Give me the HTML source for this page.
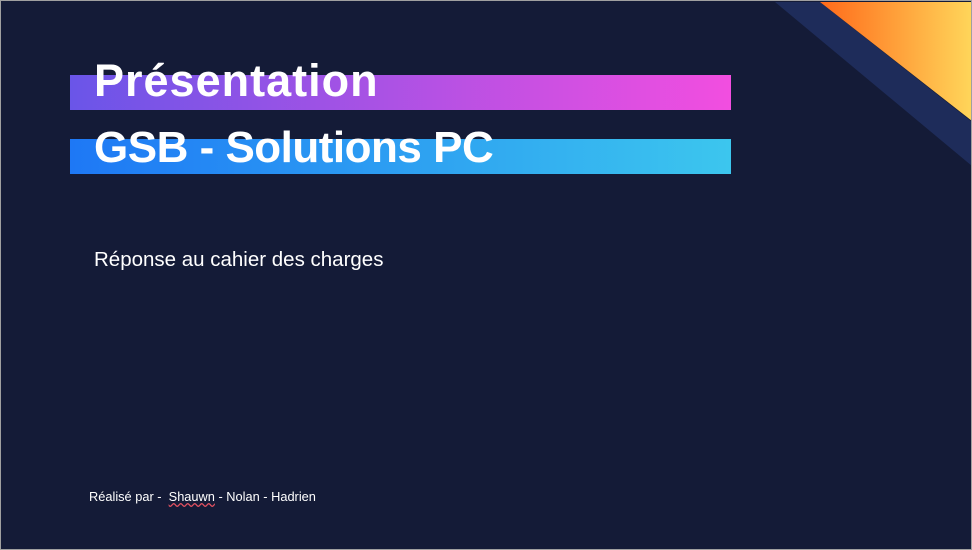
<!DOCTYPE html>
<html><head><meta charset="utf-8"><style>
html,body{margin:0;padding:0}
body{width:972px;height:550px;overflow:hidden;background:#141b37;position:relative;font-family:"Liberation Sans",sans-serif}
.frame{position:absolute;left:0;top:0;width:970px;height:548px;border:1px solid #a0a0a0}
.bar{position:absolute;left:70px;width:661px;height:35px}
.t{position:absolute;left:94px;color:#fff;font-weight:bold;font-size:44px;letter-spacing:-0.5px}
</style></head><body>
<svg style="position:absolute;left:0;top:0" width="972" height="550">
<defs><linearGradient id="o" x1="0" y1="0" x2="1" y2="0"><stop offset="0" stop-color="#ff6a1a"/><stop offset="1" stop-color="#ffd65a"/></linearGradient></defs>
<polygon points="775,2 820,2 972,122 972,166" fill="#1e2c5a"/>
<polygon points="820,2 972,2 972,121" fill="url(#o)"/>
</svg>
<div class="bar" style="top:75px;background:linear-gradient(90deg,#6a55e8,#f24ee0)"></div>
<div class="bar" style="top:139px;background:linear-gradient(90deg,#1e78f5,#3cc6ee)"></div>
<div class="t" style="top:55px;font-size:45px;letter-spacing:1px">Présentation</div>
<div class="t" style="top:123px">GSB - Solutions PC</div>
<div style="position:absolute;left:94px;top:248px;color:#fff;font-size:20.5px">Réponse au cahier des charges</div>
<div style="position:absolute;left:89px;top:489px;color:#fff;font-size:12.8px">Réalisé par -&nbsp; <span style="text-decoration:underline wavy #e05060">Shauwn</span> - Nolan - Hadrien</div>
<div class="frame"></div>
</body></html>
